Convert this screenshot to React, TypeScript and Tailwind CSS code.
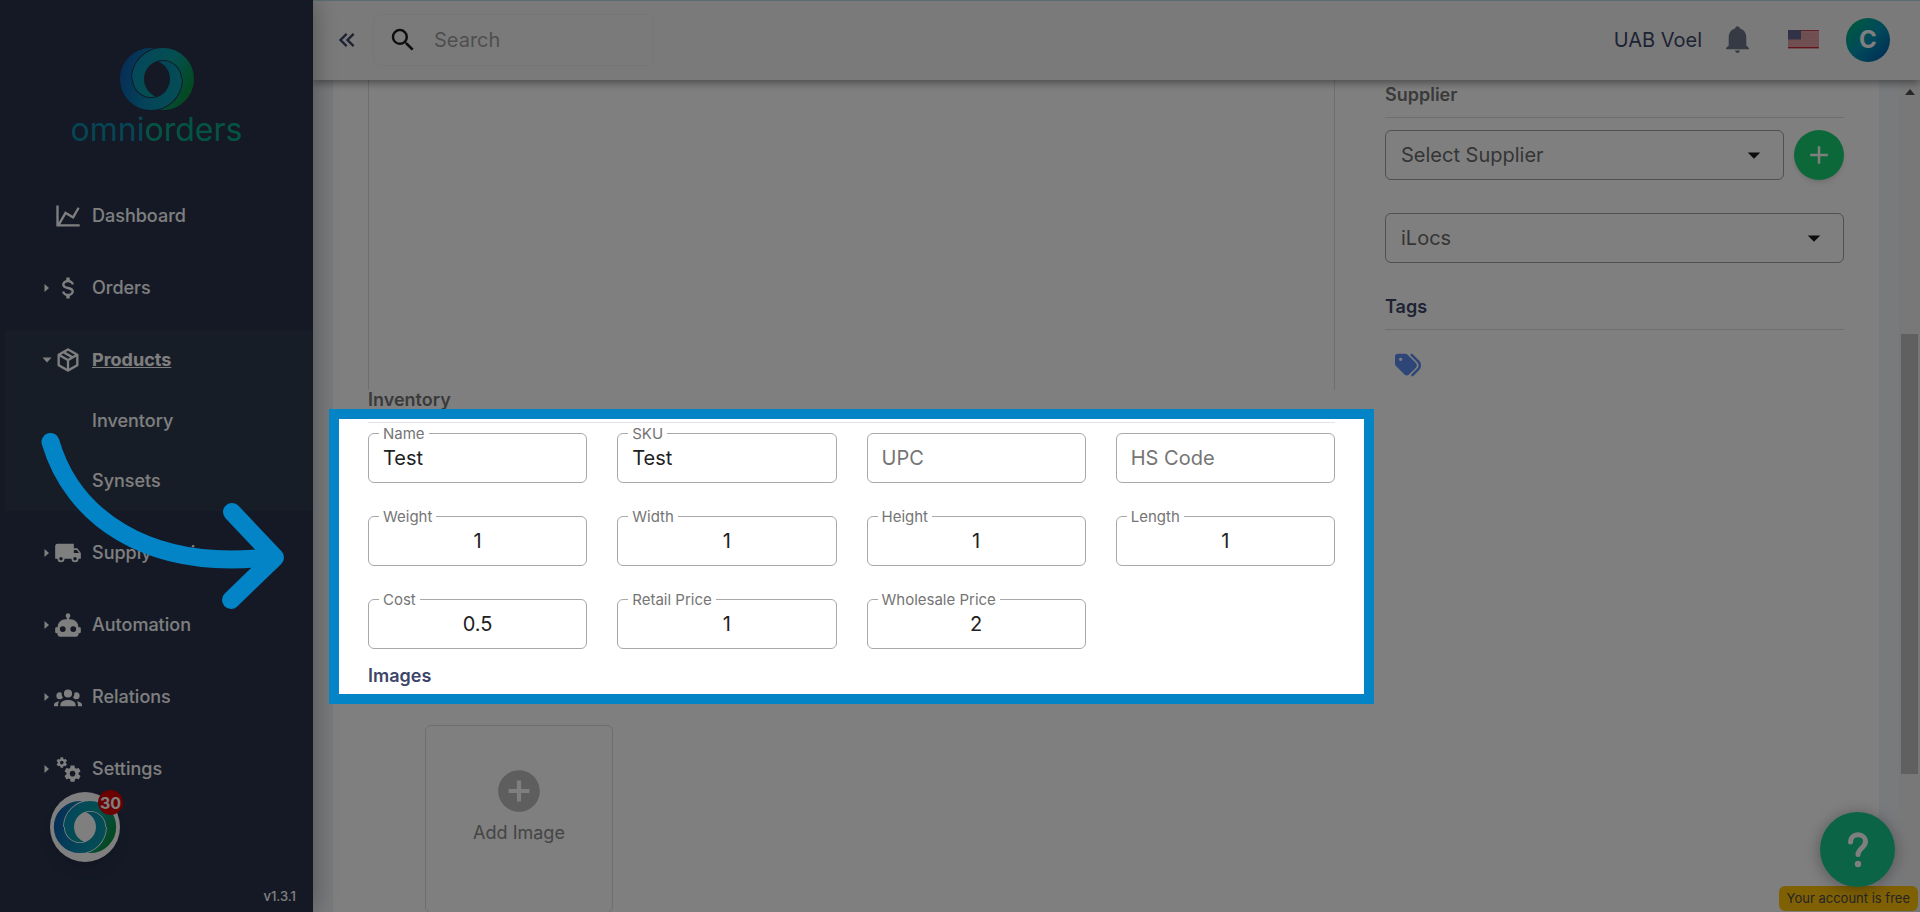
import { useId, useState } from 'react'
import type { ReactNode } from 'react'
import { FaTags } from 'react-icons/fa6'
import { MdAdd, MdAddCircle, MdArrowDropDown, MdSearch } from 'react-icons/md'

const ICONS = {
  dashboard:
    'M16,11.78L20.24,4.45L21.97,5.45L16.74,14.5L10.23,10.75L5.46,19H22V21H2V3H4V17.54L9.5,8L16,11.78Z',
  orders:
    'M7,15H9C9,16.08 10.37,17 12,17C13.63,17 15,16.08 15,15C15,13.9 13.96,13.5 11.76,12.97C9.64,12.44 7,11.78 7,9C7,7.21 8.47,5.69 10.5,5.18V3H13.5V5.18C15.53,5.69 17,7.21 17,9H15C15,7.92 13.63,7 12,7C10.37,7 9,7.92 9,9C9,10.1 10.04,10.5 12.24,11.03C14.36,11.56 17,12.22 17,15C17,16.79 15.53,18.31 13.5,18.82V21H10.5V18.82C8.47,18.31 7,16.79 7,15Z',
  products:
    'M21,16.5C21,16.88 20.79,17.21 20.47,17.38L12.57,21.82C12.41,21.94 12.21,22 12,22C11.79,22 11.59,21.94 11.43,21.82L3.53,17.38C3.21,17.21 3,16.88 3,16.5V7.5C3,7.12 3.21,6.79 3.53,6.62L11.43,2.18C11.59,2.06 11.79,2 12,2C12.21,2 12.41,2.06 12.57,2.18L20.47,6.62C20.79,6.79 21,7.12 21,7.5V16.5M12,4.15L10.11,5.22L16,8.61L17.96,7.5L12,4.15M6.04,7.5L12,10.85L13.96,9.75L8.08,6.35L6.04,7.5M5,15.91L11,19.29V12.58L5,9.21V15.91M19,15.91V9.21L13,12.58V19.29L19,15.91Z',
  supply:
    'M18,18.5A1.5,1.5 0 0,1 16.5,17A1.5,1.5 0 0,1 18,15.5A1.5,1.5 0 0,1 19.5,17A1.5,1.5 0 0,1 18,18.5M19.5,9.5L21.46,12H17V9.5M6,18.5A1.5,1.5 0 0,1 4.5,17A1.5,1.5 0 0,1 6,15.5A1.5,1.5 0 0,1 7.5,17A1.5,1.5 0 0,1 6,18.5M20,8H17V4H3C1.89,4 1,4.89 1,6V17H3A3,3 0 0,0 6,20A3,3 0 0,0 9,17H15A3,3 0 0,0 18,20A3,3 0 0,0 21,17H23V12L20,8Z',
  automation:
    'M12,2A2,2 0 0,1 14,4C14,4.74 13.6,5.39 13,5.73V7H14A7,7 0 0,1 21,14H22A1,1 0 0,1 23,15V18A1,1 0 0,1 22,19H21V20A2,2 0 0,1 19,22H5A2,2 0 0,1 3,20V19H2A1,1 0 0,1 1,18V15A1,1 0 0,1 2,14H3A7,7 0 0,1 10,7H11V5.73C10.4,5.39 10,4.74 10,4A2,2 0 0,1 12,2M7.5,13A2.5,2.5 0 0,0 5,15.5A2.5,2.5 0 0,0 7.5,18A2.5,2.5 0 0,0 10,15.5A2.5,2.5 0 0,0 7.5,13M16.5,13A2.5,2.5 0 0,0 14,15.5A2.5,2.5 0 0,0 16.5,18A2.5,2.5 0 0,0 19,15.5A2.5,2.5 0 0,0 16.5,13Z',
  relations:
    'M12,5.5A3.5,3.5 0 0,1 15.5,9A3.5,3.5 0 0,1 12,12.5A3.5,3.5 0 0,1 8.5,9A3.5,3.5 0 0,1 12,5.5M5,8C5.56,8 6.08,8.15 6.53,8.42C6.38,9.85 6.8,11.27 7.66,12.38C7.16,13.34 6.16,14 5,14A3,3 0 0,1 2,11A3,3 0 0,1 5,8M19,8A3,3 0 0,1 22,11A3,3 0 0,1 19,14C17.84,14 16.84,13.34 16.34,12.38C17.2,11.27 17.62,9.85 17.47,8.42C17.92,8.15 18.44,8 19,8M5.5,18.25C5.5,16.18 8.41,14.5 12,14.5C15.59,14.5 18.5,16.18 18.5,18.25V20H5.5V18.25M0,20V18.5C0,17.11 1.89,15.94 4.45,15.6C3.86,16.28 3.5,17.22 3.5,18.25V20H0M24,20H20.5V18.25C20.5,17.22 20.14,16.28 19.55,15.6C22.11,15.94 24,17.11 24,18.5V20Z',
  settings:
    'M15.9,18.45C17.25,18.45 18.35,17.35 18.35,16C18.35,14.65 17.25,13.55 15.9,13.55C14.54,13.55 13.45,14.65 13.45,16C13.45,17.35 14.54,18.45 15.9,18.45M21.1,16.68L22.58,17.84C22.71,17.95 22.75,18.13 22.66,18.29L21.26,20.71C21.17,20.86 21,20.92 20.83,20.86L19.09,20.16C18.73,20.44 18.33,20.67 17.91,20.85L17.64,22.7C17.62,22.87 17.47,23 17.3,23H14.5C14.32,23 14.18,22.87 14.15,22.7L13.89,20.85C13.46,20.67 13.07,20.44 12.71,20.16L10.96,20.86C10.81,20.92 10.62,20.86 10.54,20.71L9.14,18.29C9.05,18.13 9.09,17.95 9.22,17.84L10.7,16.68L10.65,16L10.7,15.31L9.22,14.16C9.09,14.05 9.05,13.86 9.14,13.71L10.54,11.29C10.62,11.13 10.81,11.07 10.96,11.13L12.71,11.84C13.07,11.56 13.46,11.32 13.89,11.15L14.15,9.29C14.18,9.13 14.32,9 14.5,9H17.3C17.47,9 17.62,9.13 17.64,9.29L17.91,11.15C18.33,11.32 18.73,11.56 19.09,11.84L20.83,11.13C21,11.07 21.17,11.13 21.26,11.29L22.66,13.71C22.75,13.86 22.71,14.05 22.58,14.16L21.1,15.31L21.15,16L21.1,16.68M6.69,8.07C7.56,8.07 8.26,7.37 8.26,6.5C8.26,5.63 7.56,4.92 6.69,4.92A1.58,1.58 0 0,0 5.11,6.5C5.11,7.37 5.82,8.07 6.69,8.07M10.03,6.94L11,7.68C11.07,7.75 11.09,7.87 11.03,7.97L10.13,9.53C10.08,9.63 9.96,9.67 9.86,9.63L8.74,9.18L8,9.62L7.81,10.81C7.79,10.92 7.7,11 7.59,11H5.79C5.67,11 5.58,10.92 5.56,10.81L5.4,9.62L4.64,9.18L3.52,9.63C3.41,9.67 3.3,9.63 3.24,9.53L2.34,7.97C2.28,7.87 2.31,7.75 2.39,7.68L3.34,6.94L3.31,6.5L3.34,6.06L2.39,5.32C2.31,5.25 2.28,5.13 2.34,5.03L3.24,3.47C3.3,3.37 3.41,3.33 3.52,3.37L4.63,3.82L5.4,3.38L5.56,2.19C5.58,2.08 5.67,2 5.79,2H7.59C7.7,2 7.79,2.08 7.81,2.19L8,3.38L8.74,3.82L9.86,3.37C9.96,3.33 10.08,3.37 10.13,3.47L11.03,5.03C11.09,5.13 11.07,5.25 11,5.32L10.03,6.06L10.06,6.5L10.03,6.94Z',
  collapse:
    'M18.41,7.41L17,6L11,12L17,18L18.41,16.59L13.83,12L18.41,7.41M12.41,7.41L11,6L5,12L11,18L12.41,16.59L7.83,12L12.41,7.41Z',
}

type IconName = keyof typeof ICONS

interface NavEntry {
  icon: IconName
  label: string
  expandable?: boolean
  children?: string[]
}

const NAV: NavEntry[] = [
  { icon: 'dashboard', label: 'Dashboard' },
  { icon: 'orders', label: 'Orders', expandable: true },
  { icon: 'products', label: 'Products', expandable: true, children: ['Inventory', 'Synsets'] },
  { icon: 'supply', label: 'Supply Chain', expandable: true },
  { icon: 'automation', label: 'Automation', expandable: true },
  { icon: 'relations', label: 'Relations', expandable: true },
  { icon: 'settings', label: 'Settings', expandable: true },
]

const FIELDS = [
  { label: 'Name', value: 'Test' },
  { label: 'SKU', value: 'Test' },
  { label: 'UPC', value: '' },
  { label: 'HS Code', value: '' },
  { label: 'Weight', value: '1', numeric: true },
  { label: 'Width', value: '1', numeric: true },
  { label: 'Height', value: '1', numeric: true },
  { label: 'Length', value: '1', numeric: true },
  { label: 'Cost', value: '0.5', numeric: true },
  { label: 'Retail Price', value: '1', numeric: true },
  { label: 'Wholesale Price', value: '2', numeric: true },
]

function Icon({ name, className }: { name: IconName; className?: string }) {
  return (
    <svg viewBox="0 0 24 24" fill="currentColor" className={className} aria-hidden="true">
      <path d={ICONS[name]} />
    </svg>
  )
}

// Two interlocked rings: the right one passes over at the top, the left one at the bottom
function LogoMark({ className, gap }: { className?: string; gap: string }) {
  const id = useId()
  return (
    <svg viewBox="0 0 76 64" className={className} fill="none" aria-hidden="true">
      <defs>
        <linearGradient id={`${id}l`} gradientUnits="userSpaceOnUse" x1="2" y1="24" x2="62" y2="40">
          <stop offset="0" stopColor="#0d5cac" />
          <stop offset="0.5" stopColor="#0888b4" />
          <stop offset="1" stopColor="#0a9cac" />
        </linearGradient>
        <linearGradient id={`${id}r`} gradientUnits="userSpaceOnUse" x1="16" y1="18" x2="72" y2="48">
          <stop offset="0" stopColor="#0890b8" />
          <stop offset="0.5" stopColor="#08a0a0" />
          <stop offset="1" stopColor="#089038" />
        </linearGradient>
        <clipPath id={`${id}c`}>
          <rect x="0" y="32" width="76" height="32" />
        </clipPath>
      </defs>
      <circle cx="32" cy="32" r="25" stroke={`url(#${id}l)`} strokeWidth="12" />
      <circle cx="44" cy="32" r="25" stroke={gap} strokeWidth="14" />
      <circle cx="44" cy="32" r="25" stroke={`url(#${id}r)`} strokeWidth="12" />
      <g clipPath={`url(#${id}c)`}>
        <circle cx="32" cy="32" r="25" stroke={gap} strokeWidth="14" />
        <circle cx="32" cy="32" r="25" stroke={`url(#${id}l)`} strokeWidth="12" />
      </g>
    </svg>
  )
}

function NavItem({ entry }: { entry: NavEntry }) {
  const open = !!entry.children
  return (
    <li className={open ? 'ml-[5px] bg-[#2f3a4e]' : 'ml-[5px]'}>
      <a href={`#${entry.icon}`} className="flex h-15 items-center pl-[37px]">
        <span className="flex w-3 items-center">
          {entry.expandable && (
            <svg viewBox="0 0 10 10" fill="currentColor" className="size-[10px]" aria-hidden="true">
              <path d={open ? 'M0.500 2.500H9.500L5 7.500Z' : 'M2.500 1V9L7 5Z'} />
            </svg>
          )}
        </span>
        <Icon name={entry.icon} className="size-7" />
        <span className={open ? 'ml-[10px] font-bold underline' : 'ml-[10px]'}>{entry.label}</span>
      </a>
      {entry.children && (
        <ul className="pt-px">
          {entry.children.map((child) => (
            <li key={child}>
              <a href={`#${child.toLowerCase()}`} className="flex h-15 items-center pl-[87px]">
                {child}
              </a>
            </li>
          ))}
        </ul>
      )}
    </li>
  )
}

function Field({ label, value, numeric }: { label: string; value: string; numeric?: boolean }) {
  const id = useId()
  const [current, setCurrent] = useState(value)
  return (
    <div className="relative">
      <label
        htmlFor={id}
        className={
          current
            ? 'absolute -top-[7px] left-[11px] bg-white px-1 text-[15px] leading-4 text-[#757575]'
            : 'absolute top-0 left-[15px] text-xl leading-[50px] text-[#757575]'
        }
      >
        {label}
      </label>
      <input
        id={id}
        value={current}
        onChange={(e) => setCurrent(e.target.value)}
        className={[
          'block h-[50px] w-full rounded-md border border-[#a8a8a8] px-[14px] text-xl text-[#212121] outline-none',
          numeric ? 'text-center' : '',
        ].join(' ')}
      />
    </div>
  )
}

function SelectBox({ label }: { label: string }) {
  return (
    <div className="relative min-w-0 flex-1">
      <select
        aria-label={label}
        className="block h-[50px] w-full appearance-none rounded-md border border-[#a0a0a0] bg-white px-[15px] text-xl text-[#6b6b6b] outline-none"
      >
        <option>{label}</option>
      </select>
      <MdArrowDropDown className="pointer-events-none absolute top-[10px] right-[15px] size-[30px] text-[#1a1a1a]" />
    </div>
  )
}

function Heading({ children, muted }: { children: ReactNode; muted?: boolean }) {
  return (
    <h2
      className={[
        'text-lg leading-5 font-semibold',
        muted ? 'text-[#757575]' : 'text-[#3d4669]',
      ].join(' ')}
    >
      {children}
    </h2>
  )
}

export default function App() {
  return (
    <div className="relative flex h-screen overflow-hidden bg-[#f1f4f9] font-['Inter','Noto_Sans',sans-serif]">
      {/* Sidebar */}
      <aside className="relative z-20 flex w-[313px] shrink-0 flex-col bg-[#28324b] text-lg font-medium text-white shadow-[0_0_24px_rgba(0,0,0,0.35)]">
        <div className="flex flex-col items-center pt-[47px]">
          <LogoMark className="h-16 w-[76px]" gap="#28324b" />
          <p className="text-[32px] leading-[38px] font-normal text-[#0a8ba8]">
            omni<span className="text-[#08a887]">orders</span>
          </p>
        </div>
        <nav className="mt-[37px] grow">
          <ul className="flex flex-col gap-3">
            {NAV.map((entry) => (
              <NavItem key={entry.icon} entry={entry} />
            ))}
          </ul>
        </nav>
        <p className="absolute right-[17px] bottom-[6px] text-[13px] leading-5">v1.3.1</p>
        <button
          aria-label="Announcements"
          className="absolute bottom-[50px] left-[50px] flex size-[70px] items-center justify-center rounded-full bg-white shadow-lg"
        >
          <LogoMark className="h-[54px] w-16" gap="#ffffff" />
          <span className="absolute -top-[2px] -right-[3px] flex size-[25px] items-center justify-center rounded-full bg-[#d50000] text-base font-bold">
            30
          </span>
        </button>
      </aside>

      <div className="flex min-w-0 flex-1 flex-col">
        {/* Top bar */}
        <header className="relative z-10 flex h-20 shrink-0 items-center border-t border-[#b8dbe4] bg-[#f5f5f5] pr-[30px] pb-0.5 pl-5 text-xl text-[#3d4669] shadow-[0_3px_8px_rgba(0,0,0,0.4)]">
          <button aria-label="Collapse menu">
            <Icon name="collapse" className="size-7" />
          </button>
          <label className="ml-3 flex h-[52px] w-[281px] items-center rounded-md border border-[#ededed] pl-[14px]">
            <MdSearch className="size-[30px] shrink-0 text-[#1a1a1a]" />
            <input
              aria-label="Search"
              placeholder="Search"
              className="ml-4 w-full min-w-0 outline-none placeholder:text-[#9e9e9e]"
            />
          </label>
          <span className="ml-auto">UAB Voel</span>
          <button aria-label="Notifications" className="ml-6">
            <svg viewBox="0 0 23 27" fill="#6c7488" className="h-[27px] w-[23px]" aria-hidden="true">
              <path d="M11.500 0.300C12.800 0.300 13.600 1.200 13.900 2.600C18 3.700 20.300 7 20.300 11.500V19.500L23 22V23.300H0V22L2.700 19.500V11.500C2.700 7 5 3.700 9.100 2.600C9.400 1.200 10.200 0.300 11.500 0.300Z" />
              <path d="M9 24.500H14C13.700 26 12.700 27 11.500 27C10.300 27 9.300 26 9 24.500Z" />
            </svg>
          </button>
          <button aria-label="Language" className="ml-[39px]">
            <svg viewBox="0 0 31 19" className="h-[19px] w-[31px]" aria-hidden="true">
              <rect width="31" height="19" fill="#e0a0a4" />
              <path d="M0 4.500H31M0 7.500H31M0 10.500H31M0 13.500H31" stroke="#dc9a9e" strokeWidth="1" />
              <path d="M0 0.500H31" stroke="#c04850" strokeWidth="1" />
              <path d="M0 17.500H31" stroke="#cc2434" strokeWidth="1" />
              <rect width="13" height="9.500" fill="#62628e" />
            </svg>
          </button>
          <button className="ml-[27px] flex size-11 items-center justify-center rounded-full bg-linear-to-br from-[#05b56c] via-[#0794b4] to-[#0a52a8] text-2xl font-bold text-white">
            C
          </button>
        </header>

        <div className="flex min-h-0 flex-1">
          <main className="mx-5 flex flex-1 bg-white px-[35px]">
            <div className="min-w-0 flex-1">
              {/* Description editor, scrolled past its toolbar */}
              <div className="h-[310px] border-x border-[#dcdcdc]" />

              <section className="relative">
                <Heading muted>Inventory</Heading>
                <div className="mt-3 border-t border-[#e4e4e4]" />
                <div className="mt-[10px] grid grid-cols-4 gap-x-[30px] gap-y-[33px]">
                  {FIELDS.map((f) => (
                    <Field key={f.label} {...f} />
                  ))}
                </div>
                <div className="mt-[17px]">
                  <Heading>Images</Heading>
                </div>
                {/* Spotlight: the huge spread dims everything outside the box */}
                <div className="pointer-events-none absolute -inset-x-[39px] top-[19px] -bottom-[18px] z-50 border-[10px] border-[#0284c7] shadow-[0_0_0_4000px_rgba(0,0,0,0.5)]" />
              </section>

              <button className="mt-[39px] ml-[57px] flex size-[188px] flex-col items-center gap-[3px] rounded-md border border-[#dcdcdc] pt-10 text-lg text-[#8a8a8a]">
                <MdAddCircle className="size-[50px] text-[#bdbdbd]" />
                Add Image
              </button>
            </div>

            <div className="ml-[50px] w-[459px] shrink-0 pt-[5px]">
              <Heading muted>Supplier</Heading>
              <div className="mt-3 border-t border-[#dcdcdc]" />
              <div className="mt-3 flex gap-[10px]">
                <SelectBox label="Select Supplier" />
                <button
                  aria-label="Add supplier"
                  className="flex size-[50px] items-center justify-center rounded-full bg-[#18d070] text-white shadow-md"
                >
                  <MdAdd className="size-[30px]" />
                </button>
              </div>
              <div className="mt-[33px] flex">
                <SelectBox label="iLocs" />
              </div>
              <div className="mt-[34px]">
                <Heading>Tags</Heading>
              </div>
              <div className="mt-3 border-t border-[#dcdcdc]" />
              <button aria-label="Add tag" className="mt-[22px] ml-[10px]">
                <FaTags className="size-[26px] text-[#5b8def]" />
              </button>
            </div>
          </main>

          {/* Scrollbar */}
          <div className="flex w-[21px] shrink-0 flex-col items-center bg-[#f1f1f1]">
            <svg viewBox="0 0 10 6" className="mt-[9px] h-[6px] w-[10px]" aria-hidden="true">
              <path d="M0 6L5 0L10 6Z" fill="#505050" />
            </svg>
            <div className="mt-[239px] h-[440px] w-[17px] bg-[#c1c1c1]" />
          </div>
        </div>
      </div>

      {/* Free plan notice */}
      <p className="absolute right-[2px] bottom-px rounded-md bg-[#ffc107] px-2 text-[13px] leading-[25px] text-[#4a4a4a]">
        Your account is free
      </p>
      <button
        aria-label="Help"
        className="absolute right-[25px] bottom-[25px] flex size-[75px] items-center justify-center rounded-full bg-[#18c98c] shadow-[0_2px_16px_rgba(0,0,0,0.35)]"
      >
        <svg viewBox="0 0 20 36" className="h-9 w-5" fill="none" aria-hidden="true">
          <path
            d="M2.500 10C2.500 5.500 5.500 2.800 10 2.800C14.500 2.800 17.500 5.700 17.500 9.500C17.500 15.500 10 16.500 10 22.500"
            stroke="#fff"
            strokeWidth="5"
            strokeLinecap="round"
          />
          <circle cx="10" cy="32" r="3.200" fill="#fff" />
        </svg>
      </button>

      {/* Pointer arrow towards the highlighted form */}
      <svg
        viewBox="0 0 260 190"
        className="pointer-events-none absolute top-[426px] left-[35px] z-[60] h-[190px] w-[260px]"
        fill="none"
        stroke="#0284c7"
        strokeWidth="18"
        strokeLinecap="round"
        strokeLinejoin="round"
        aria-hidden="true"
      >
        <path d="M15.500 16C37 89 110 146 236 131" />
        <path d="M197 86L240 131.500L196 174" />
      </svg>
    </div>
  )
}
